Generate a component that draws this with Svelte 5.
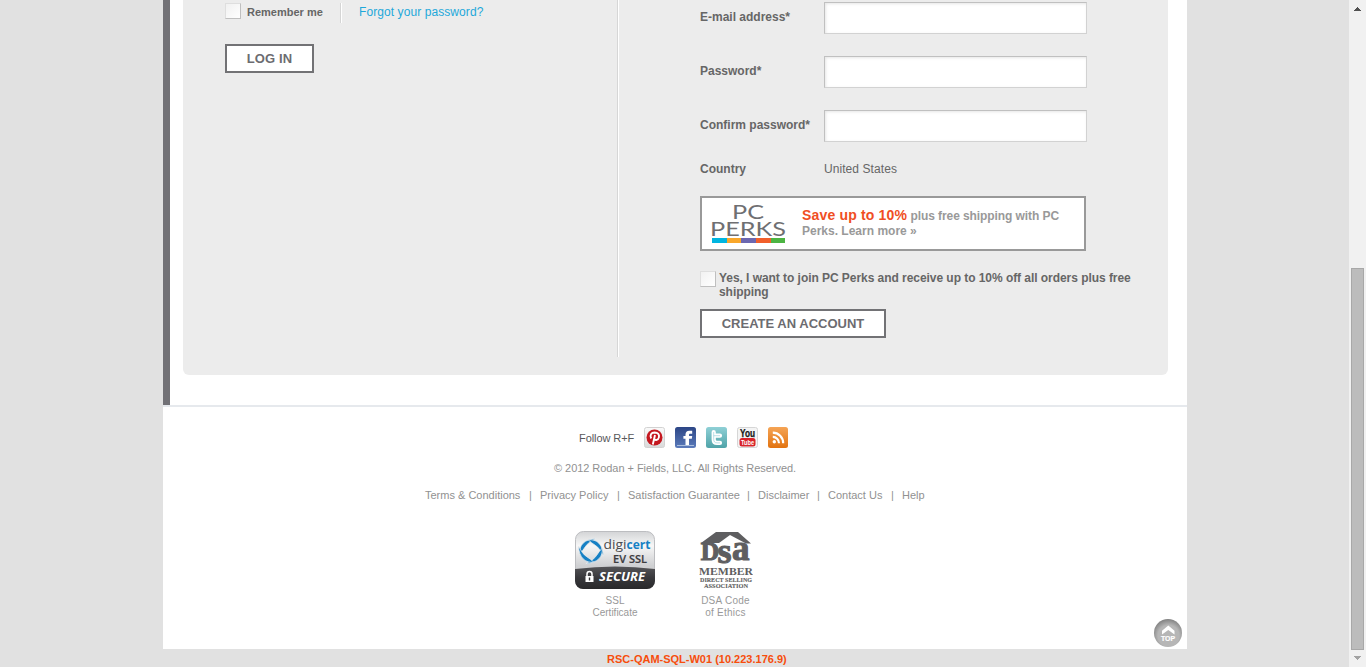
<script>
  const fields = [
    { label: 'E-mail address*', type: 'email' },
    { label: 'Password*', type: 'password' },
    { label: 'Confirm password*', type: 'password' }
  ];
  const links = [
    { text: 'Terms & Conditions', w: 96 },
    { text: 'Privacy Policy', w: 69 },
    { text: 'Satisfaction Guarantee', w: 111 },
    { text: 'Disclaimer', w: 51 },
    { text: 'Contact Us', w: 55 },
    { text: 'Help', w: 22 }
  ];
</script>

<div class="screen">
  <div class="view">
    <div class="page">
      <div class="body">
        <div class="panel">
          <section class="login">
            <div class="remember">
              <span class="check"></span>
              <b>Remember me</b>
              <a class="forgot" href="#forgot">Forgot your password?</a>
            </div>
            <button class="login-btn">LOG IN</button>
          </section>
          <section class="signup">
            {#each fields as f}
              <div class="field"><label for={f.label}>{f.label}</label><input id={f.label} type={f.type} /></div>
            {/each}
            <div class="country"><b>Country</b><span>United States</span></div>
            <div class="perks">
              <svg class="perks-logo" width="76" height="46" viewBox="0 -4 76 46">
                <g fill="#6f6f72" font-family="Lato, sans-serif">
                  <text x="21" y="15.500" font-size="19" textLength="32" lengthAdjust="spacingAndGlyphs">PC</text>
                  <text x="-1" y="32.500" font-size="19" textLength="76" lengthAdjust="spacingAndGlyphs">PERKS</text>
                </g>
                <path fill="#00b5e0" d="M1 35h15v5H1z" /><path fill="#f9a72b" d="M16 35h14v5H16z" />
                <path fill="#6c67b0" d="M30 35h15v5H30z" /><path fill="#f15f2b" d="M45 35h15v5H45z" />
                <path fill="#4cb443" d="M60 35h14v5H60z" />
              </svg>
              <p><strong>Save up to 10%</strong> <span class="tail">plus free shipping with PC</span><br />Perks. Learn more »</p>
            </div>
            <div class="join">
              <span class="check"></span>
              <b>Yes, I want to join PC Perks and receive up to 10% off all orders plus free<br />shipping</b>
            </div>
            <button class="create-btn">CREATE AN ACCOUNT</button>
          </section>
        </div>
      </div>

      <footer>
        <div class="follow">
          <span>Follow R+F</span>
          <svg viewBox="0 0 21 21">
            <defs>
              <linearGradient id="pin" x2="0" y2="1"><stop stop-color="#fafafa" /><stop offset="1" stop-color="#d9d9d9" /></linearGradient>
              <linearGradient id="fb" x2="0" y2="1"><stop stop-color="#2c4686" /><stop offset="1" stop-color="#5b7bbb" /></linearGradient>
              <linearGradient id="tw" x2="0" y2="1"><stop stop-color="#8fd0d6" /><stop offset="1" stop-color="#4fa3a8" /></linearGradient>
              <linearGradient id="rss" x2="0" y2="1"><stop stop-color="#f5a455" /><stop offset="1" stop-color="#e27310" /></linearGradient>
            </defs>
            <rect x=".5" y=".5" width="20" height="20" rx="2" fill="url(#pin)" stroke="#d2d2d2" />
            <circle cx="10.500" cy="10.500" r="8" fill="#c4171f" />
            <path d="M7.200 11.500C5.400 8 7.400 5.600 10.600 5.500c3.400 0 5 2 4.300 4.900-.6 2.700-3.700 3.300-4.700 1.700M11 8 8.800 17.500" fill="none" stroke="#fff" stroke-width="1.900" />
          </svg>
          <svg viewBox="0 0 21 21">
            <rect width="21" height="21" rx="2.5" fill="url(#fb)" />
            <path d="M10.500 18.500v-6.800H8.400V9h2.100V7.500c0-2.500 1.400-3.800 3.700-3.800h3v3h-1.800c-1.100 0-1.400.4-1.400 1.300v1h3.200l-.4 2.700H14v6.800z" fill="#fff" />
            <path d="M2 18.500h17" stroke="#a9bddd" />
          </svg>
          <svg viewBox="0 0 21 21">
            <rect width="21" height="21" rx="2.5" fill="url(#tw)" />
            <path d="M7.700 5v7.400c0 2.300 1.100 3.500 3.400 3.500H14M7.700 8.700H14" fill="none" stroke="#fff" stroke-width="4.200" stroke-linecap="round" stroke-linejoin="round" />
            <path d="M7.700 5v7.400c0 2.300 1.100 3.500 3.400 3.500H14M7.700 8.700H14" fill="none" stroke="#8ccbd8" stroke-width=".6" />
          </svg>
          <svg viewBox="0 0 21 21">
            <rect x=".5" y=".5" width="20" height="20" rx="2" fill="#f4f4f4" stroke="#d6d6d6" />
            <text x="3" y="10" font-family="Liberation Sans, sans-serif" font-weight="700" font-size="10" fill="#171717" stroke="#171717" stroke-width=".25" textLength="15" lengthAdjust="spacingAndGlyphs">You</text>
            <rect x="2.500" y="11" width="16" height="8.500" rx="2.500" fill="#d8232a" />
            <text x="4" y="18.200" font-family="Liberation Sans, sans-serif" font-weight="700" font-size="8" fill="#fff" textLength="13" lengthAdjust="spacingAndGlyphs">Tube</text>
          </svg>
          <svg viewBox="0 0 21 21">
            <rect width="20" height="21" rx="2.5" fill="url(#rss)" />
            <circle cx="6.300" cy="14.800" r="1.700" fill="#fff" />
            <path d="M4.800 9.800c3.400 0 6.200 2.900 6.200 6.400M4.800 5.600c5.800 0 10.400 4.800 10.400 10.600" fill="none" stroke="#fff" stroke-width="2.200" />
          </svg>
        </div>
        <p class="copy">© 2012 Rodan + Fields, LLC. All Rights Reserved.</p>
        <nav>
          {#each links as l, i}
            {#if i}<i>|</i>{/if}
            <a href="#link" style:width="{l.w}px">{l.text}</a>
          {/each}
        </nav>
        <div class="seals">
          <figure class="ssl">
            <svg width="80" height="58" viewBox="0 0 80 58">
              <defs>
                <linearGradient id="silver" x2="0" y2="1"><stop stop-color="#d3d4d6" /><stop offset=".25" stop-color="#f7f7f7" /><stop offset=".6" stop-color="#cfd0d2" /></linearGradient>
                <linearGradient id="dark" x2="0" y2="1"><stop stop-color="#555558" /><stop offset=".5" stop-color="#38383b" /><stop offset="1" stop-color="#29292b" /></linearGradient>
              </defs>
              <rect x=".5" y=".5" width="79" height="57" rx="8" fill="url(#silver)" stroke="#bcbdc0" />
              <path d="M0 38q40-5 80 0v12a8 8 0 0 1-8 8H8a8 8 0 0 1-8-8z" fill="url(#dark)" />
              <g fill="#1680c4" stroke="#eceded" stroke-width=".7">
                {#each [20, 110, 200, 290] as turn}
                  <path transform="rotate({turn} 16 20)" d="M6.500 26.500C2.500 19 5.500 11 16.500 6.500 12.500 11 10 14 9.200 18 8.500 21 7.800 23.500 6.500 26.500z" />
                {/each}
              </g>
              <g font-family="Open Sans, sans-serif">
                <text x="28.500" y="18" font-size="13" fill="#4b4b4e" textLength="23" lengthAdjust="spacingAndGlyphs">digi</text>
                <text x="51.500" y="18" font-size="13" font-weight="700" fill="#1680c4" textLength="24" lengthAdjust="spacingAndGlyphs">cert</text>
                <text x="38" y="31.500" font-size="11" font-weight="600" fill="#3c3c3f" stroke="#3c3c3f" stroke-width=".2" textLength="34" lengthAdjust="spacingAndGlyphs">EV SSL</text>
                <text x="24" y="50" font-size="12.500" font-weight="700" font-style="italic" fill="#fff" textLength="46" lengthAdjust="spacingAndGlyphs">SECURE</text>
              </g>
              <path d="M10.500 45h8v6h-8z" fill="#fff" /><path d="M12 45v-2a2.500 2.500 0 0 1 5 0v2" fill="none" stroke="#fff" stroke-width="1.500" />
              <path d="M14.500 46.500v3" stroke="#333" stroke-width="1.400" />
            </svg>
            <figcaption>SSL<br />Certificate</figcaption>
          </figure>
          <figure class="dsa">
            <svg width="54" height="58" viewBox="0 0 54 58" fill="#5e5e60">
              <path d="M2 12 17 1h22l13 11.500h-5L31 4 20 12z" />
              <g font-family="Liberation Serif, serif" font-weight="700">
                <text y="28.500" font-size="25.500" stroke="#5e5e60" stroke-width="1.100"><tspan x="1.800">D</tspan><tspan x="18.500" y="32" font-size="36">s</tspan><tspan x="33" y="28.500" font-size="35">a</tspan></text>
                <text x="0" y="44" font-size="10.500" textLength="54" lengthAdjust="spacingAndGlyphs">MEMBER</text>
                <text x="1" y="51" font-size="6" stroke="#5e5e60" stroke-width=".1" textLength="52" lengthAdjust="spacingAndGlyphs">DIRECT SELLING</text>
                <text x="5" y="57" font-size="6" stroke="#5e5e60" stroke-width=".1" textLength="44" lengthAdjust="spacingAndGlyphs">ASSOCIATION</text>
              </g>
            </svg>
            <figcaption>DSA Code<br />of Ethics</figcaption>
          </figure>
        </div>
        <svg class="top" width="28" height="28" viewBox="0 0 28 28">
          <defs><radialGradient id="disc" cx=".52" cy=".6" r=".58"><stop offset=".65" stop-color="#b6b6b6" /><stop offset="1" stop-color="#858585" /></radialGradient></defs>
          <circle cx="14" cy="14" r="14" fill="url(#disc)" />
          <path d="m8 11.800 6.300-5.300 6.200 5.300v3.700l-6.200-4.500L8 15.500z" fill="#fff" />
          <text x="7" y="22" font-family="Liberation Sans, sans-serif" font-size="6.600" font-weight="700" fill="#fff" stroke="#fff" stroke-width=".2" textLength="14" lengthAdjust="spacingAndGlyphs">TOP</text>
        </svg>
      </footer>
    </div>
    <div class="server">RSC-QAM-SQL-W01 (10.223.176.9)</div>
  </div>
  <div class="scroll">
    <svg width="17" height="17" shape-rendering="crispEdges"><path d="M8 7h1v1h1v1h1v1h1v1H5v-1h1V9h1V8h1z" fill="#505050" /></svg>
    <div class="thumb"></div>
    <svg width="17" height="17" shape-rendering="crispEdges"><path d="M5 6h7v1h-1v1h-1v1H9v1H8V9H7V8H6V7H5z" fill="#a3a3a3" /></svg>
  </div>
</div>

<style>
  :global(body) { background: #e1e1e1; overflow: hidden; }
  * { box-sizing: border-box; }
  .screen { display: flex; width: 1366px; height: 667px; overflow: hidden; font: 12px/14px "Liberation Sans", Arial, sans-serif; color: #666; background: #e1e1e1; }
  .view { width: 1349px; }
  .page { width: 1024px; height: 649px; margin-left: 163px; background: #fff; }
  .body { height: 405px; border-left: 7px solid #727176; padding-left: 13px; }
  .panel { display: flex; width: 985px; height: 375px; background: #ececec; border-radius: 0 0 6px 6px; }
  .login { width: 436px; height: 357px; padding: 3px 0 0 42px; border-right: 1px solid #fff; box-shadow: inset -1px 0 #d6d6d6; }
  .remember { display: flex; align-items: flex-start; height: 20px; font-size: 11px; white-space: nowrap; }
  .remember b { width: 94px; margin-left: 6px; padding-top: 2px; }
  .check { flex: none; width: 16px; height: 16px; background: linear-gradient(135deg, #f1f1f1, #fff); border: 1px solid; border-color: #dedede #bfbfbf #bfbfbf #dedede; }
  .forgot { height: 20px; padding: 2px 0 0 17px; border-left: 1px solid #fff; box-shadow: -1px 0 #d5d5d5; color: #1ea8da; font-size: 12px; letter-spacing: .08px; text-decoration: none; }
  button { display: block; height: 29px; padding: 0; border: 2px solid #727275; border-radius: 0; background: #fff; color: #6c6c70; font: bold 13px/25px "Liberation Sans", Arial, sans-serif; }
  .login-btn { width: 89px; margin-top: 21px; letter-spacing: .15px; }
  .signup { width: 470px; padding: 2px 0 0 81px; white-space: nowrap; }
  .field { display: flex; height: 54px; }
  .field label { width: 124px; padding-top: 8px; font-weight: bold; }
  input { width: 263px; height: 32px; padding: 0 6px; border: 1px solid; border-color: #c0c0c0 #d2d2d2 #d2d2d2 #c0c0c0; background: #fff; box-shadow: inset 1px 1px 3px #e6e6e6; }
  .country { display: flex; height: 34px; margin-top: -2px; }
  .country b { width: 124px; }
  .country span { letter-spacing: .07px; }
  .perks { display: flex; width: 386px; height: 55px; border: 2px solid #999; background: #fff; color: #999; }
  .perks-logo { margin: 1px 0 0 9px; }
  .perks p { margin: 10px 0 0 15px; font-weight: bold; line-height: 15px; }
  .perks strong { font-size: 14px; color: #f04e23; letter-spacing: .17px; }
  .tail { letter-spacing: -.08px; }
  .join { display: flex; margin-top: 20px; height: 38px; }
  .join b { margin-left: 3px; letter-spacing: -.05px; }
  .create-btn { width: 186px; }
  footer { position: relative; height: 244px; border-top: 2px solid #e6e9ed; padding-top: 20px; color: #919191; font-size: 11px; }
  .follow { display: flex; gap: 10px; margin-left: 416px; height: 21px; white-space: nowrap; }
  .follow span { width: 55px; padding-top: 4px; color: #58585b; letter-spacing: -.08px; }
  .follow svg { width: 21px; height: 21px; }
  .copy { margin: 13px 0 0 391px; height: 27px; letter-spacing: -.05px; }
  nav { display: flex; margin-left: 262px; height: 43px; white-space: nowrap; }
  nav a { color: inherit; text-decoration: none; }
  nav i { width: 19px; text-align: center; font-style: normal; }
  .seals { display: flex; margin-left: 412px; }
  figure { margin: 0; text-align: center; font-size: 10px; line-height: 12px; color: #999; }
  figure svg { display: block; margin-bottom: 6px; }
  .ssl { width: 80px; }
  .dsa { width: 54px; margin-left: 44px; }
  .dsa figcaption { margin-left: -1px; letter-spacing: .25px; }
  .top { position: absolute; right: 5px; bottom: 2px; }
  .server { margin-left: 607px; padding-top: 3px; font: bold 11px/14px "Liberation Sans", Arial, sans-serif; color: #f74d0c; }
  .scroll { width: 17px; height: 667px; background: #f1f1f1; }
  .scroll svg { display: block; }
  .thumb { width: 13px; height: 382px; margin: 251px 0 0 2px; border: 1px solid #a8a8a8; background: #bcbcbc; }
</style>
